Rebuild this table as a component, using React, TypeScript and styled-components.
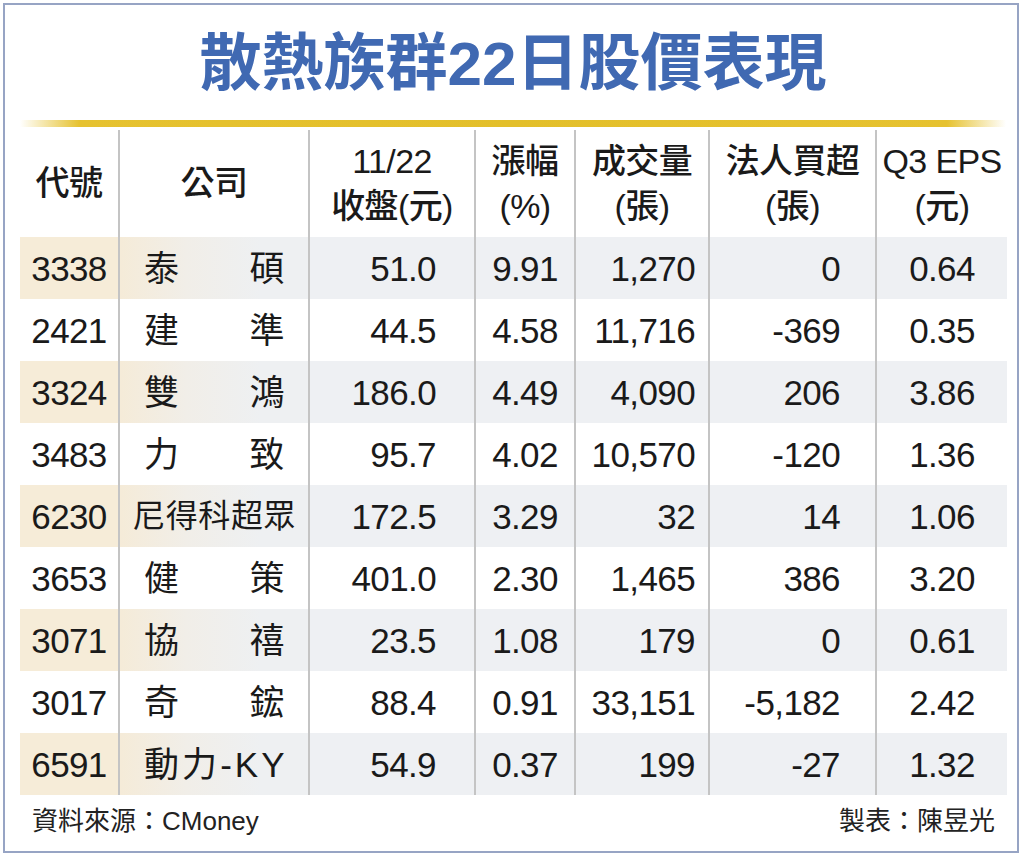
import React from 'react';
import styled, { createGlobalStyle } from 'styled-components';

const GlobalStyle = createGlobalStyle`
  html, body {
    margin: 0;
    padding: 0;
    background: #ffffff;
  }
  body {
    font-family: "Liberation Sans", "Noto Sans CJK TC", sans-serif;
    color: #1c1c1c;
  }
`;

type Stock = {
  code: string,
  name: string,
  close: string,
  change: string,
  volume: string,
  net: string,
  eps: string,
  long?: boolean,
}

type Align = 'center' | 'right' | 'spread';
type Tint = 'beige' | 'fade' | 'gray';

type Column = {
  key: 'code' | 'name' | 'close' | 'change' | 'volume' | 'net' | 'eps',
  head: string[],
  width: number,
  align: Align,
  pad: number,
  tint: Tint,
}

const columns: Column[] = [
  {key: 'code', head: ['代號'], width: 98, align: 'center', pad: 0, tint: 'beige'},
  {key: 'name', head: ['公司'], width: 190, align: 'spread', pad: 24, tint: 'fade'},
  {key: 'close', head: ['11/22', '收盤(元)'], width: 166, align: 'right', pad: 38, tint: 'gray'},
  {key: 'change', head: ['漲幅', '(%)'], width: 100, align: 'center', pad: 0, tint: 'gray'},
  {key: 'volume', head: ['成交量', '(張)'], width: 134, align: 'right', pad: 13, tint: 'gray'},
  {key: 'net', head: ['法人買超', '(張)'], width: 167, align: 'right', pad: 35, tint: 'gray'},
  {key: 'eps', head: ['Q3 EPS', '(元)'], width: 132, align: 'center', pad: 0, tint: 'gray'},
];

const stocks: Stock[] = [
  {code: '3338', name: '泰碩', close: '51.0', change: '9.91', volume: '1,270', net: '0', eps: '0.64'},
  {code: '2421', name: '建準', close: '44.5', change: '4.58', volume: '11,716', net: '-369', eps: '0.35'},
  {code: '3324', name: '雙鴻', close: '186.0', change: '4.49', volume: '4,090', net: '206', eps: '3.86'},
  {code: '3483', name: '力致', close: '95.7', change: '4.02', volume: '10,570', net: '-120', eps: '1.36'},
  {code: '6230', name: '尼得科超眾', close: '172.5', change: '3.29', volume: '32', net: '14', eps: '1.06', long: true},
  {code: '3653', name: '健策', close: '401.0', change: '2.30', volume: '1,465', net: '386', eps: '3.20'},
  {code: '3071', name: '協禧', close: '23.5', change: '1.08', volume: '179', net: '0', eps: '0.61'},
  {code: '3017', name: '奇鋐', close: '88.4', change: '0.91', volume: '33,151', net: '-5,182', eps: '2.42'},
  {code: '6591', name: '動力-KY', close: '54.9', change: '0.37', volume: '199', net: '-27', eps: '1.32'},
];

const gridTemplate = columns.map(c => `${c.width}px`).join(' ');

const tints: Record<Tint, string> = {
  beige: '#f6ecd8',
  fade: 'linear-gradient(to right, #f5ebd8 0%, #f1eee8 35%, #eef0f2 75%)',
  gray: '#eef0f3',
};

export default function App() {
  return (
    <>
      <GlobalStyle />
      <Frame>
        <Title>散熱族群22日股價表現</Title>
        <GoldRule />
        <HeadRow>
          {columns.map((col, i) => (
            <HeadCell key={col.key} $sep={i > 0}>
              {col.head.map(line => <HeadLine key={line}>{line}</HeadLine>)}
            </HeadCell>
          ))}
        </HeadRow>
        {stocks.map((s, r) => (
          <DataRow key={s.code}>
            {columns.map((col, i) => {
              const value = s[col.key];
              const bg = r % 2 === 0 ? tints[col.tint] : '#ffffff';
              if (col.align === 'spread') {
                // company names are spread letter by letter across the cell
                return (
                  <Cell key={col.key} $sep $align="spread" $pad={s.long ? 13 : col.pad} $bg={bg} $small={s.long}>
                    {[...value].map((ch, k) => <span key={k}>{ch}</span>)}
                  </Cell>
                );
              }
              return (
                <Cell key={col.key} $sep={i > 0} $align={col.align} $pad={col.pad} $bg={bg}>
                  {value}
                </Cell>
              );
            })}
          </DataRow>
        ))}
        <Footer>
          <span>資料來源：CMoney</span>
          <span>製表：陳昱光</span>
        </Footer>
      </Frame>
    </>
  );
}

const Frame = styled.div`
  box-sizing: border-box;
  width: 1016px;
  height: 850px;
  margin: 3px 0 0 3px;
  border: 2px solid #97a4c4;
  padding: 0 11px 0 15px;
  display: flex;
  flex-direction: column;
  background: #ffffff;
`

const Title = styled.h1`
  margin: 0;
  padding-top: 28px;
  height: 62px;
  line-height: 62px;
  text-align: center;
  font-family: "Liberation Sans", "Noto Sans CJK TC", sans-serif;
  font-size: 62px;
  font-weight: 700;
  color: #4069b2;
`

const GoldRule = styled.div`
  height: 7px;
  margin: 25px 0 3px 0;
  background: linear-gradient(to right, rgba(232, 194, 40, 0) 0%, #e6c230 6%, #e3bf2a 50%, #e6c230 94%, rgba(232, 194, 40, 0) 100%);
`

const HeadRow = styled.div`
  display: grid;
  grid-template-columns: ${gridTemplate};
  height: 107px;
`

const HeadCell = styled.div<{$sep: boolean}>`
  display: flex;
  flex-direction: column;
  justify-content: center;
  align-items: center;
  border-left: ${props => props.$sep ? '2px solid #c4c4c4' : 'none'};
  font-size: 34px;
  font-weight: 500;
  letter-spacing: -0.6px;
  color: #1a1a1a;
`

const HeadLine = styled.div`
  line-height: 45px;
  white-space: nowrap;
`

const DataRow = styled.div`
  display: grid;
  grid-template-columns: ${gridTemplate};
  height: 62px;
`

const Cell = styled.div<{$sep: boolean, $align: Align, $pad: number, $bg: string, $small?: boolean}>`
  box-sizing: border-box;
  display: flex;
  align-items: center;
  justify-content: ${props => props.$align === 'right' ? 'flex-end' : props.$align === 'spread' ? 'space-between' : 'center'};
  padding: 0 ${props => props.$pad}px;
  border-left: ${props => props.$sep ? '2px solid #c4c4c4' : 'none'};
  background: ${props => props.$bg};
  font-size: ${props => props.$small ? '32px' : '35px'};
  letter-spacing: -0.6px;
  line-height: 1;
  white-space: nowrap;
  color: #1a1a1a;
`

const Footer = styled.div`
  flex: 1;
  display: flex;
  justify-content: space-between;
  align-items: center;
  padding: 0 11px 10px 12px;
  font-size: 26px;
  color: #222222;
`
